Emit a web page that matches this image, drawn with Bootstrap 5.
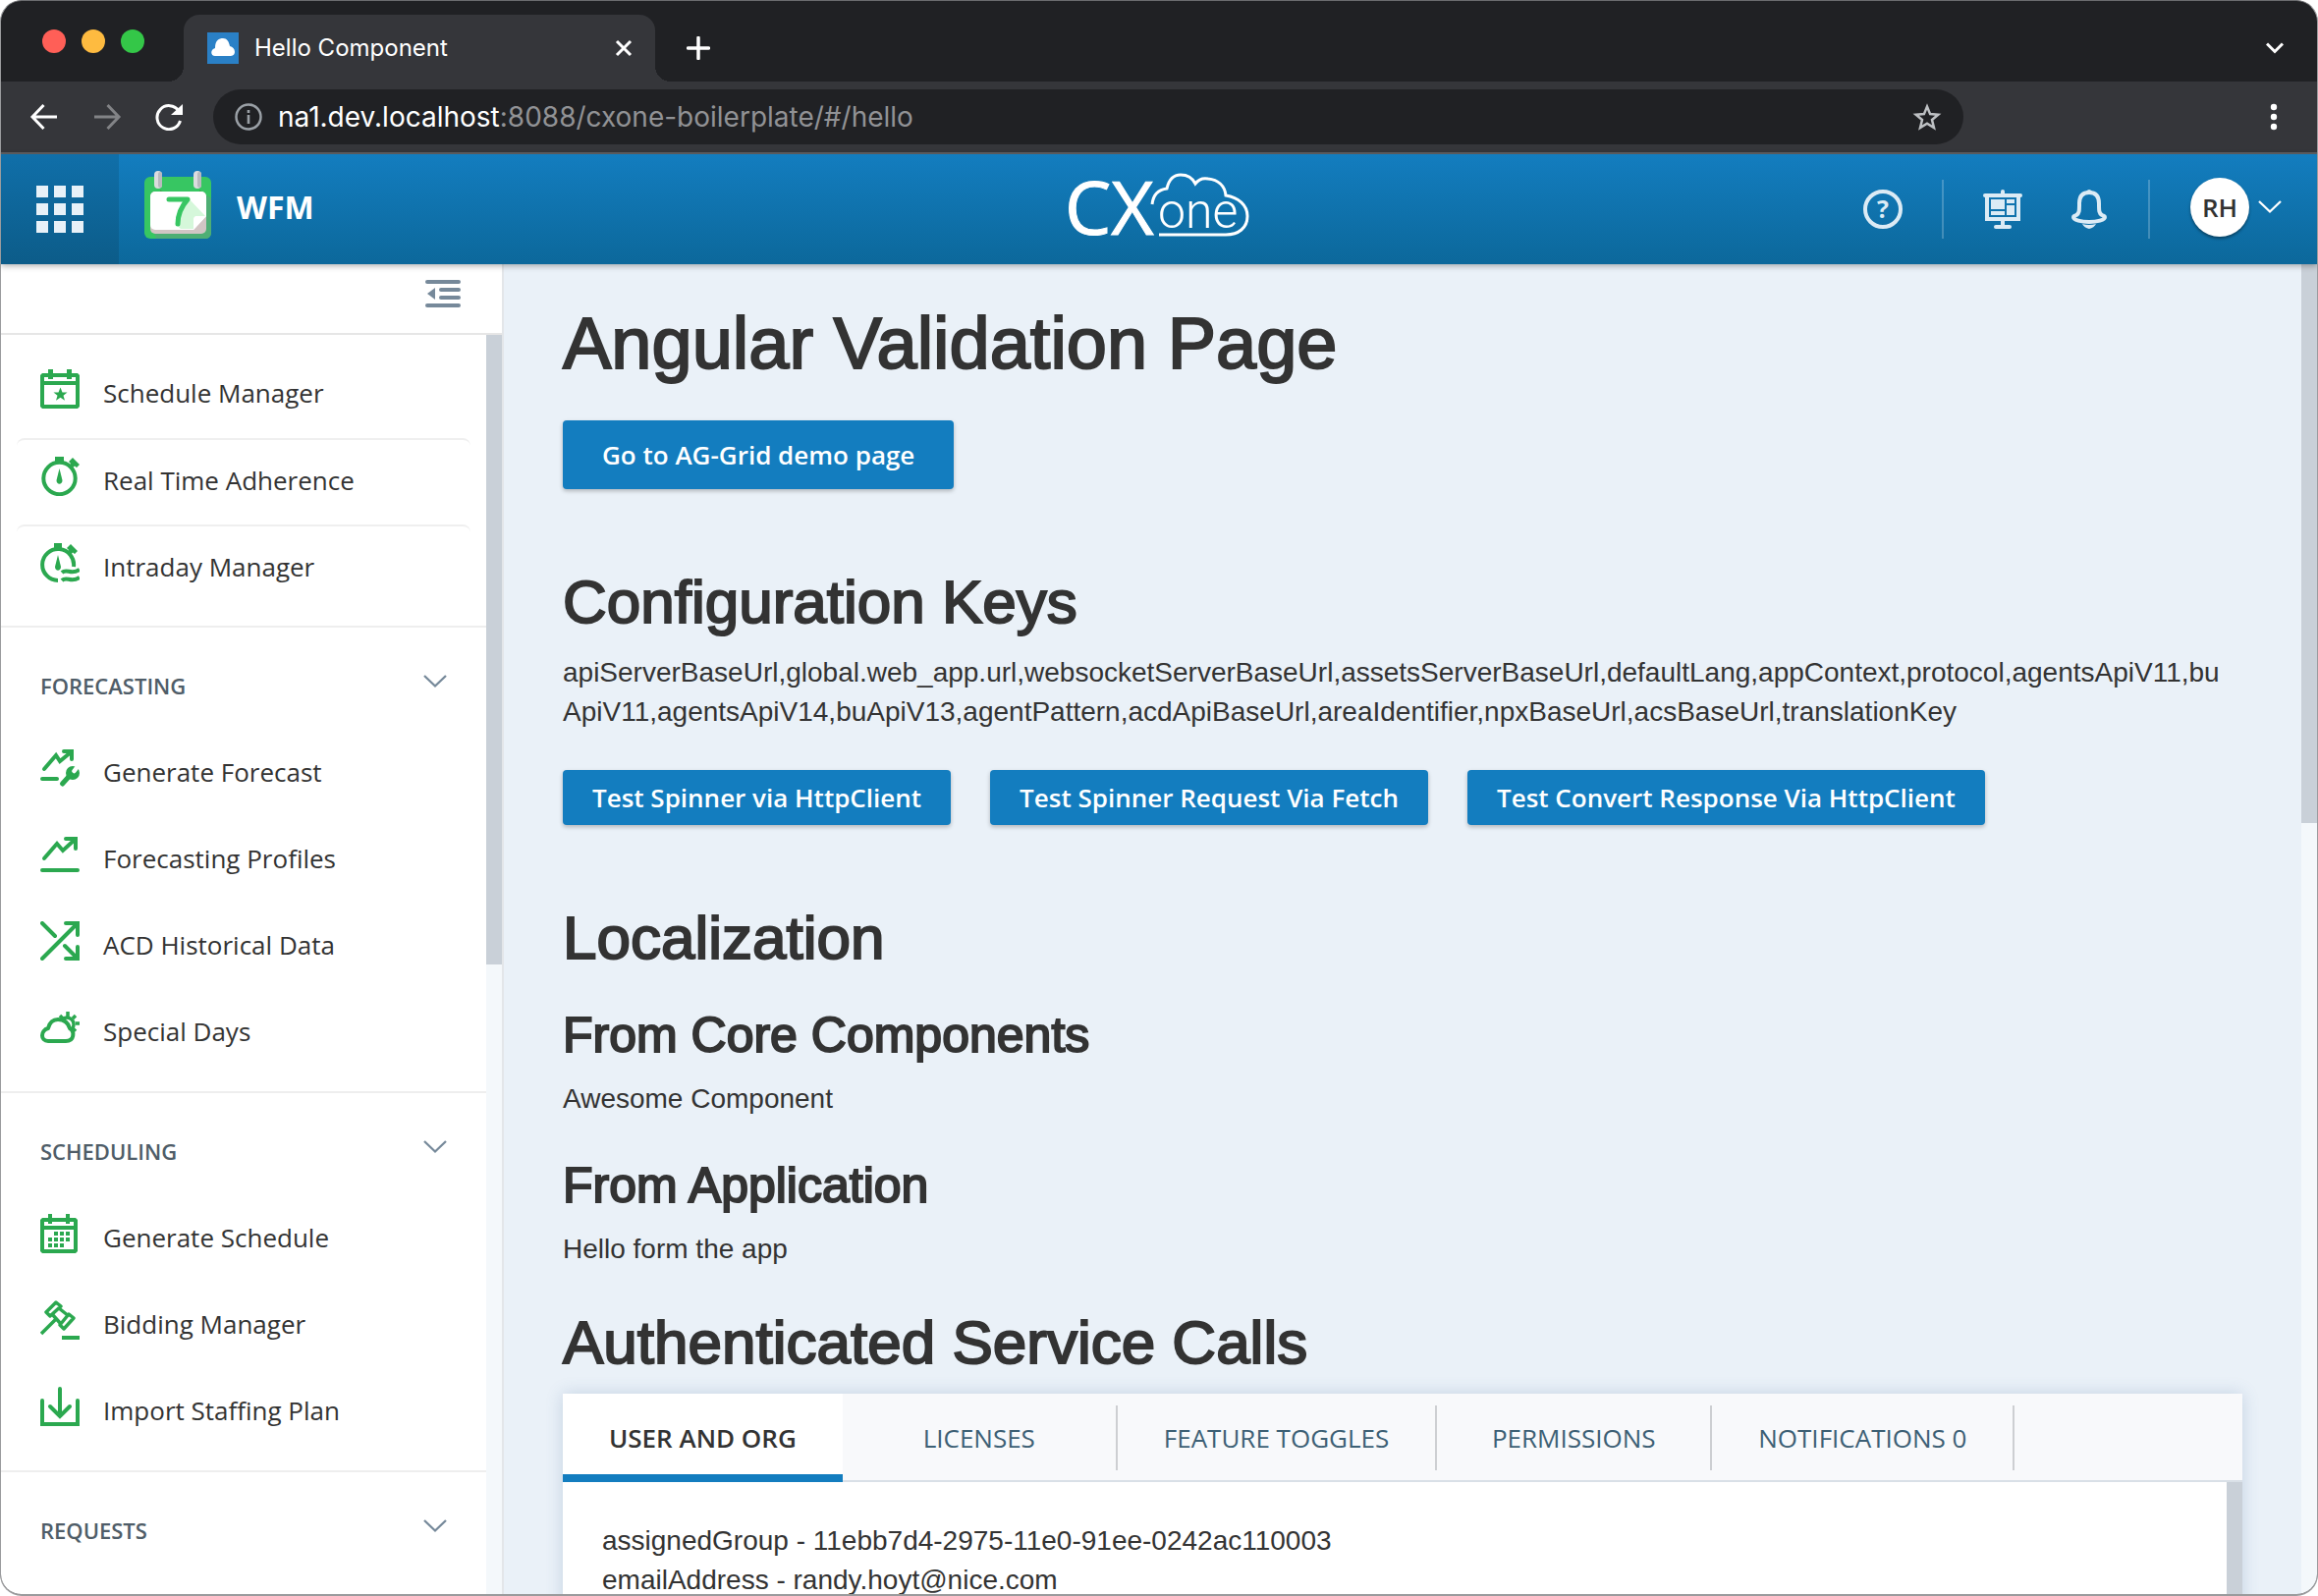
<!DOCTYPE html>
<html lang="en">
<head>
<meta charset="utf-8">
<meta name="viewport" content="width=device-width, initial-scale=1">
<title>Hello Component</title>
<link href="https://cdn.jsdelivr.net/npm/bootstrap@5.3.0/dist/css/bootstrap.min.css" rel="stylesheet">
<style>
  :root { --ink:#333; --blue:#137dbf; --green:#2ba84f; --slate:#76899a; --page:#eaf1f8; --thumb:#c9d0d8; --track:#f4f8fb; }
  body { background:#fff; color:var(--ink); font-family:"Liberation Sans", Arial, sans-serif; font-size:28px; line-height:40px; }
  svg { display:block; flex:none; }
  .window { height:100vh; border:1px solid #9a9b9d; border-top-color:#6b6c6f; border-bottom-width:2px; border-radius:22px; background:#202124; }
  .bare { background:none; border:0; padding:0; color:inherit; }

  /* browser chrome */
  .tab-strip { height:82px; padding:14px 34px 0 42px; color:#fff; font-family:Inter, sans-serif; }
  .lights { padding-right:40px; padding-bottom:14px; }
  .light { width:24px; height:24px; border-radius:50%; }
  .light-close { background:#ff5f57; }
  .light-min { background:#febb40; }
  .light-max { background:#34c748; }
  .browser-tab { width:480px; height:68px; padding:0 20px 0 24px; background:#35363a; border-radius:16px 16px 0 0; font-size:24px; position:relative; }
  .browser-tab::before, .browser-tab::after { content:""; position:absolute; bottom:0; width:16px; height:16px; }
  .browser-tab::before { left:-16px; background:radial-gradient(circle at 0 0, transparent 16px, #35363a 16px); }
  .browser-tab::after { right:-16px; background:radial-gradient(circle at 100% 0, transparent 16px, #35363a 16px); }
  .toolbar { height:74px; padding:8px 32px 8px 28px; background:#35363a; border-bottom:2px solid #5f6063; color:#fff; }
  .address { height:56px; margin-left:30px; border-radius:28px; background:#202124; padding:0 22px 0 22px; font:28px/40px Inter, sans-serif; }
  .address-path { color:#919295; }
  .toolbar-end { width:328px; }

  /* application bar */
  .app-bar { height:112px; background:linear-gradient(#137dbf, #0c689b); color:#fff; position:relative; z-index:2; box-shadow:0 2px 6px rgba(0,0,0,.3); font-family:"Open Sans", sans-serif; }
  .app-launcher { width:120px; height:112px; background:linear-gradient(#106fa9, #0c5c89); }
  .app-title { font-size:32px; font-weight:700; }
  .bar-side { flex:1 1 0; }
  .bar-rule { width:2px; height:60px; background:rgba(255,255,255,.22); }
  .bell { margin:0 42px 0 50px; }
  .account { margin:0 35px 0 17px; }
  .avatar { width:60px; height:60px; border-radius:50%; background:#fff; color:var(--ink); font-size:26px; font-weight:600; box-shadow:0 2px 3px rgba(0,0,0,.4); }

  /* side menu */
  .side { width:512px; background:#fff; border-right:2px solid #e3e6e9; font-family:"Open Sans", sans-serif; }
  .side-top { height:72px; padding:16px 42px 0 0; border-bottom:2px solid #e6e6e6; }
  .side-scroll { width:16px; background:var(--track); }
  .side-thumb { height:50%; background:var(--thumb); }
  .side-group { border-bottom:2px solid #eee; padding-bottom:15px; }
  .side-group:first-child { padding-top:17px; }
  .side-heading { width:100%; height:105px; padding:13px 40px 0; color:#4f5d68; font-size:22px; font-weight:600; text-align:left; }
  .side-heading svg { margin-bottom:8px; color:var(--slate); }
  .side-link { height:88px; margin:0 16px; padding:18px 24px 0; gap:24px; color:var(--ink); font-size:26px; line-height:48px; text-decoration:none; }
  .ruled .side-link + .side-link { border-top:2px solid #efefef; border-radius:8px; padding-top:17px; }

  /* page */
  .page { background:var(--page); padding:38px 60px 0 60px; }
  .page-scroll { width:16px; background:var(--track); }
  .page-thumb { height:42%; background:var(--thumb); }
  .page h1, .page h2, .page h3 { font-weight:400; color:var(--ink); -webkit-text-stroke:2px var(--ink); }
  .page h1 { font-size:74px; line-height:86px; margin:0 0 35px; }
  .page h2 { font-size:62px; line-height:72px; margin:0 0 16px; }
  .page h3 { font-size:50px; line-height:58px; margin:34px 0 16px; }
  .page p { margin:0 0 39px; }
  .page .section-title { margin-top:79px; }
  .key-list { word-break:break-all; padding-right:16px; }
  .action { --bs-btn-bg:var(--blue); --bs-btn-hover-bg:#106fa9; --bs-btn-color:#fff; --bs-btn-hover-color:#fff; height:56px; padding:0 30px; border:0; border-radius:4px; font:600 26px/40px "Open Sans", sans-serif; box-shadow:0 2px 4px rgba(0,0,0,.25); }
  .action-tall { height:70px; padding:0 40px; }
  .action-row { gap:40px; }
  .panel { background:#fff; box-shadow:0 0 16px rgba(60,100,150,.22); }
  .panel .nav-tabs { --bs-nav-tabs-border-width:0; height:90px; background:#f8f9fb; border-bottom:2px solid #d9e0e7; font-family:"Open Sans", sans-serif; }
  .panel .nav-item { display:flex; align-items:center; height:90px; }
  .panel .nav-link { height:66px; min-width:280px; padding:0 47px; margin:0; color:#3d6075; font-size:26px; border:0; border-right:2px solid #cdcfd2; border-radius:0; }
  .panel .nav-link.active { height:90px; padding-top:8px; border-right:0; border-bottom:8px solid var(--blue); color:var(--ink); font-weight:600; }
  .panel-text { padding:40px; }
  .panel-scroll { width:16px; background:var(--thumb); }
</style>
<script src="https://cdn.jsdelivr.net/npm/bootstrap@5.3.0/dist/js/bootstrap.bundle.min.js" defer></script>
</head>
<body>
<svg class="d-none" xmlns="http://www.w3.org/2000/svg">
  <symbol id="chev" viewBox="0 0 24 14"><path d="M1 1l11 10.500L23 1" fill="none" stroke="currentColor" stroke-width="2.300"/></symbol>
</svg>
<div class="window d-flex flex-column overflow-hidden">

  <div class="tab-strip d-flex align-items-center">
    <div class="lights d-flex gap-3">
      <span class="light light-close"></span>
      <span class="light light-min"></span>
      <span class="light light-max"></span>
    </div>
    <div class="browser-tab d-flex align-items-center">
      <svg width="32" height="32" viewBox="0 0 32 32"><path fill="#2a80c6" d="M0 0h32v32H0z"/><path fill="#fff" d="M8 24c-5 0-5-7 0-8 0-8 4-10 8-10s6 3 7 8c6 1 7 10 1 10z"/></svg>
      <span class="ms-3 flex-grow-1">Hello Component</span>
      <button class="bare" aria-label="Close tab"><svg width="24" height="24" viewBox="0 0 24 24" fill="none" stroke="#fff" stroke-width="3"><path d="M5 5l14 14M19 5L5 19"/></svg></button>
    </div>
    <button class="bare ms-4 ps-2" aria-label="New tab"><svg width="24" height="24" viewBox="0 0 24 24" fill="none" stroke="#fff" stroke-width="3.500" stroke-linecap="round"><path d="M12 1.500v21M1.500 12h21"/></svg></button>
    <button class="bare ms-auto" aria-label="Search tabs"><svg width="18" height="12" viewBox="0 0 18 12" fill="none" stroke="#fff" stroke-width="3"><path d="M1 1.500l8 8 8-8"/></svg></button>
  </div>

  <div class="toolbar d-flex align-items-center flex-shrink-0">
    <button class="bare" aria-label="Back"><svg width="32" height="28" viewBox="0 0 32 28" fill="none" stroke="#fff" stroke-width="3"><path d="M29 14H4M15.500 2L4 14l11.500 12"/></svg></button>
    <button class="bare ms-4 ps-2" aria-label="Forward"><svg width="32" height="28" viewBox="0 0 32 28" fill="none" stroke="#828386" stroke-width="3"><path d="M3 14h25M16.500 2L28 14 16.500 26"/></svg></button>
    <button class="bare ms-4 ps-2" aria-label="Reload"><svg width="30" height="28" viewBox="0 0 30 28"><path d="M25 8A12 12 0 1 0 26.500 18" fill="none" stroke="#fff" stroke-width="3"/><path d="M29 1v11H17z" fill="#fff"/></svg></button>
    <div class="address d-flex align-items-center flex-grow-1">
      <svg width="28" height="28" viewBox="0 0 28 28"><circle cx="14" cy="14" r="12.500" fill="none" stroke="#9aa0a6" stroke-width="2.500"/><path fill="#9aa0a6" d="M12.700 12h2.600v9h-2.600zM12.700 7h2.600v3h-2.600z"/></svg>
      <div class="flex-grow-1 ms-3" role="textbox" aria-label="Address" tabindex="0">na1.dev.localhost<span class="address-path">:8088/cxone-boilerplate/#/hello</span></div>
      <button class="bare" aria-label="Bookmark"><svg width="30" height="28" viewBox="0 0 30 28"><path d="M15 3.500l3.100 7.600 8.200.6-6.300 5.300 2 8.100-7-4.400-7 4.400 2-8.100-6.300-5.300 8.200-.6z" fill="none" stroke="#bdc0c3" stroke-width="2.500"/></svg></button>
    </div>
    <div class="toolbar-end d-flex justify-content-end pe-2">
      <button class="bare" aria-label="Menu"><svg width="8" height="28" viewBox="0 0 8 28" fill="#fff"><circle cx="4" cy="4" r="3.200"/><circle cx="4" cy="14" r="3.200"/><circle cx="4" cy="24" r="3.200"/></svg></button>
    </div>
  </div>

  <header class="app-bar d-flex align-items-center flex-shrink-0">
    <div class="bar-side d-flex align-items-center">
      <button class="bare app-launcher d-flex align-items-center justify-content-center" aria-label="Applications">
        <svg width="48" height="48" viewBox="0 0 48 48" fill="#e8f1f8"><path d="M0 0h12v12H0zM18 0h12v12H18zM36 0h12v12H36zM0 18h12v12H0zM18 18h12v12H18zM36 18h12v12H36zM0 36h12v12H0zM18 36h12v12H18zM36 36h12v12H36z"/></svg>
      </button>
      <svg class="ms-4 mb-2" width="72" height="70" viewBox="0 0 72 70">
        <rect x="2" y="6" width="68" height="63" rx="6" fill="#37c662"/>
        <path d="M12 63h58v1a6 6 0 0 1-6 5H14zM64 24l6 4v35h-6z" fill="#4eae74"/>
        <path d="M18 19l10 8H18zM58 19l8 8-8 0z" fill="#42a74f"/>
        <rect x="8" y="21" width="57" height="43" rx="5" fill="#d2c5c4"/>
        <path d="M13 21h47a5 5 0 0 1 5 5v20L52 60H13a5 5 0 0 1-5-5V26a5 5 0 0 1 5-5z" fill="#fff"/>
        <path d="M47 28l17 18H56c-3 0-3 2-3 5v8H39l-5-4z" fill="#d5f7da"/>
        <path d="M65 46L52 60V50c0-3 1-4 4-4z" fill="#fff"/>
        <path d="M27 29h19c-7 8-10 15-10 25" fill="none" stroke="#37c662" stroke-width="5" stroke-linecap="round" stroke-linejoin="round"/>
        <rect x="12" y="0" width="8" height="18" rx="4" fill="#dcdcdf"/><rect x="16" y="1" width="4" height="16" rx="2" fill="#b9babf"/>
        <rect x="52" y="0" width="8" height="18" rx="4" fill="#dcdcdf"/><rect x="56" y="1" width="4" height="16" rx="2" fill="#b9babf"/>
      </svg>
      <span class="app-title ms-4 mb-1">WFM</span>
    </div>
    <svg width="202" height="112" viewBox="-8 -20 202 112" role="img" aria-label="CXone">
      <g fill="#fff"><text x="-3" y="62" font-family="Open Sans, sans-serif" font-size="75" font-weight="500" stroke="#fff">CX</text>
      <text x="92" y="55" font-family="Roboto, sans-serif" font-size="50" font-weight="300">one</text></g>
      <path d="M86 31c1-9 6-15 15-16C103 6 108 1 115 1c7 0 12 3 15 9 3-4 8-6 13-5 10 1 17 7 18 17 13 2 22 10 22 21 0 12-9 19-22 19H93" fill="none" stroke="#fff" stroke-width="3"/>
    </svg>
    <div class="bar-side d-flex align-items-center justify-content-end">
      <button class="bare me-4 pe-3" aria-label="Help"><svg width="40" height="40" viewBox="0 0 40 40"><circle cx="20" cy="20" r="18" fill="none" stroke="#dcebf5" stroke-width="4"/><text x="20" y="29" text-anchor="middle" font-family="Open Sans, sans-serif" font-size="25" font-weight="700" fill="#dcebf5">?</text></svg></button>
      <span class="bar-rule"></span>
      <button class="bare ms-4 ps-3" aria-label="Dashboard"><svg width="40" height="40" viewBox="0 0 40 40" fill="#dcebf5"><rect x="18" width="4" height="6" rx="2"/><rect y="4" width="40" height="4" rx="2"/><path d="M2 6h36v26H2zM6 8v20h28V8z" fill-rule="evenodd"/><path d="M8 10h14v10H8zM8 22h14v4H8zM24 10h8v4h-8zM24 16h8v10h-8zM18 31h4v6h-4z"/><rect x="11" y="36" width="18" height="4" rx="2"/></svg></button>
      <button class="bare bell" aria-label="Notifications"><svg width="36" height="40" viewBox="0 0 36 40" fill="none" stroke="#dcebf5" stroke-width="4"><path d="M18 3c-7 0-10 4-10 11 0 8 0 10-3 12-2 1-3 1-3 2 0 3 8 5 16 5s16-2 16-5c0-1-1-1-3-2-3-2-3-4-3-12 0-7-3-11-10-11z" stroke-linejoin="round"/><path d="M11 35q7 2 14 0-2 4-7 5-5-1-7-5zM14 3q4-6 8 0z" fill="#dcebf5" stroke="none"/></svg></button>
      <span class="bar-rule me-4"></span>
      <button class="bare account d-flex align-items-center" aria-label="Account">
        <span class="avatar d-flex align-items-center justify-content-center mb-1">RH</span>
        <svg class="ms-2 mb-1" width="26" height="14"><use href="#chev"/></svg>
      </button>
    </div>
  </header>

  <div class="d-flex flex-grow-1 overflow-hidden">
    <aside class="side d-flex flex-column flex-shrink-0">
      <div class="side-top d-flex justify-content-end flex-shrink-0">
        <button class="bare align-self-start" aria-label="Collapse menu"><svg width="36" height="28" viewBox="0 0 36 28" fill="#76899a"><rect width="36" height="4" rx="2"/><rect x="14" y="8" width="22" height="4" rx="2"/><rect x="14" y="16" width="22" height="4" rx="2"/><rect y="24" width="36" height="4" rx="2"/><path d="M2 14l8-6v12z"/></svg></button>
      </div>
      <div class="d-flex flex-grow-1 overflow-hidden">
        <nav class="flex-grow-1" aria-label="WFM">
          <div class="side-group ruled">
            <a href="#" class="side-link d-flex"><svg width="40" height="40" viewBox="0 0 40 40" fill="#2ba84f"><path fill-rule="evenodd" d="M2 4h36l2 2v32l-2 2H2l-2-2V6zM4 8v4h32V8zM4 16v20h32V16z"/><path d="M8 0h5v10H8zM27 0h5v10h-5zM20.500 18.500l2 5h5l-4 3.200 1.500 5-4.500-3-4.500 3 1.500-5-4-3.200h5z"/></svg>Schedule Manager</a>
            <a href="#" class="side-link d-flex"><svg width="40" height="40" viewBox="0 0 40 40"><circle cx="19.500" cy="22" r="16.200" fill="none" stroke="#2ba84f" stroke-width="4"/><path fill="#2ba84f" d="M15 0h9v6h-9zM29 5l4-4 7 7-3 3-2-1.500L32 12l-3-3 2-2zM19.500 12l3 12c0 5-6 5-6 0z"/></svg>Real Time Adherence</a>
            <a href="#" class="side-link d-flex"><svg width="40" height="40" viewBox="0 0 40 40"><g fill="none" stroke="#2ba84f" stroke-width="4"><path d="M18 38A16 16 0 1 1 34 24M22 30c5-5 9 3 18-3M22 38c5-5 9 3 18-3"/></g><path fill="#2ba84f" d="M14 0h8v6h-8zM27 5l4-4 7 7-3 3-2-1.500L31 12l-3-3 1-2zM18 12l3 12c0 5-6 5-6 0z"/></svg>Intraday Manager</a>
          </div>
          <div class="side-group">
            <button class="bare side-heading d-flex align-items-center justify-content-between" aria-expanded="true">FORECASTING<svg width="24" height="14"><use href="#chev"/></svg></button>
            <a href="#" class="side-link d-flex"><svg width="40" height="40" viewBox="0 0 40 40" fill="none" stroke="#2ba84f" stroke-width="4" stroke-linecap="round"><path d="M4 21L16 7l4 6L31 4M24 3h8v8M2 31h15"/><path d="M22.500 36l9-10" stroke-width="5"/><circle cx="33" cy="25" r="7" fill="#2ba84f" stroke="none"/><path d="M34.500 23l4.500-6" stroke="#fff" stroke-width="4.500"/></svg>Generate Forecast</a>
            <a href="#" class="side-link d-flex"><svg width="40" height="40" viewBox="0 0 40 40" fill="none" stroke="#2ba84f" stroke-width="4" stroke-linecap="round"><path d="M4 24L17 9l6 7L35 5M26 4h10v10M2 36h36"/></svg>Forecasting Profiles</a>
            <a href="#" class="side-link d-flex"><svg width="40" height="40" viewBox="0 0 40 40" fill="none" stroke="#2ba84f" stroke-width="4" stroke-linecap="round"><path d="M2 38L37 3M26 2h12v12M2 2l13 13M25 25l12 12M26 38h12V26"/></svg>ACD Historical Data</a>
            <a href="#" class="side-link d-flex"><svg width="40" height="40" viewBox="0 0 40 40" fill="none" stroke="#2ba84f" stroke-width="4" stroke-linejoin="round"><path d="M8 34h18c9 0 9-10 4-13-2-7-6-9-12-9-7 0-9 5-10 9-8 2-8 13 0 13z"/><path d="M22 12a7 7 0 1 1 10 10" stroke-width="3.500"/><path d="M28 4v5M20 8l3 3M36 8l-3 3M40 16h-4M36 24l-3-3" stroke-width="3.500"/></svg>Special Days</a>
          </div>
          <div class="side-group">
            <button class="bare side-heading d-flex align-items-center justify-content-between" aria-expanded="true">SCHEDULING<svg width="24" height="14"><use href="#chev"/></svg></button>
            <a href="#" class="side-link d-flex"><svg width="40" height="40" viewBox="0 0 40 40" fill="#2ba84f"><path fill-rule="evenodd" d="M2 4h34l2 2v32l-2 2H2l-2-2V6zM4 8v4h30V8zM4 16v20h30V16z"/><path d="M8 0h4v10H8zM26 0h4v10h-4zM14 18h4v4h-4zM20 18h4v4h-4zM26 18h4v4h-4zM8 24h4v4H8zM14 24h4v4h-4zM20 24h4v4h-4zM26 24h4v4h-4zM8 30h4v4H8zM14 30h4v4h-4zM20 30h4v4h-4z"/></svg>Generate Schedule</a>
            <a href="#" class="side-link d-flex"><svg width="40" height="40" viewBox="0 0 40 40" fill="none" stroke="#2ba84f" stroke-width="3.500" stroke-linejoin="round"><path d="M16 2l5 4-11 10-4-4zM29 14l5 4-10 11-4-4zM19 8l10 8M12 14l9 10M1 34l14-14"/><path d="M22 38h18" stroke-width="4"/></svg>Bidding Manager</a>
            <a href="#" class="side-link d-flex"><svg width="40" height="40" viewBox="0 0 40 40" fill="none" stroke="#2ba84f" stroke-width="4" stroke-linecap="round"><path d="M2 14v24h36V14M20 2v27M10 20l10 10 10-10"/></svg>Import Staffing Plan</a>
          </div>
          <div class="side-group border-0">
            <button class="bare side-heading d-flex align-items-center justify-content-between" aria-expanded="true">REQUESTS<svg width="24" height="14"><use href="#chev"/></svg></button>
          </div>
        </nav>
        <div class="side-scroll"><div class="side-thumb"></div></div>
      </div>
    </aside>

    <main class="page flex-grow-1 overflow-hidden">
      <h1>Angular Validation Page</h1>
      <button class="btn action action-tall d-block">Go to AG-Grid demo page</button>

      <h2 class="section-title">Configuration Keys</h2>
      <p class="key-list">apiServerBaseUrl,global.web_app.url,websocketServerBaseUrl,assetsServerBaseUrl,defaultLang,appContext,protocol,agentsApiV11,buApiV11,agentsApiV14,buApiV13,agentPattern,acdApiBaseUrl,areaIdentifier,npxBaseUrl,acsBaseUrl,translationKey</p>
      <div class="action-row d-flex">
        <button class="btn action">Test Spinner via HttpClient</button>
        <button class="btn action">Test Spinner Request Via Fetch</button>
        <button class="btn action">Test Convert Response Via HttpClient</button>
      </div>

      <h2 class="section-title">Localization</h2>
      <h3>From Core Components</h3>
      <p>Awesome Component</p>
      <h3>From Application</h3>
      <p>Hello form the app</p>

      <h2>Authenticated Service Calls</h2>
      <section class="panel">
        <ul class="nav nav-tabs" role="tablist">
          <li class="nav-item"><button class="nav-link active" role="tab" aria-selected="true">USER AND ORG</button></li>
          <li class="nav-item"><button class="nav-link" role="tab">LICENSES</button></li>
          <li class="nav-item"><button class="nav-link" role="tab">FEATURE TOGGLES</button></li>
          <li class="nav-item"><button class="nav-link" role="tab">PERMISSIONS</button></li>
          <li class="nav-item"><button class="nav-link" role="tab">NOTIFICATIONS 0</button></li>
        </ul>
        <div class="d-flex">
          <div class="panel-text flex-grow-1">
            <div>assignedGroup - 11ebb7d4-2975-11e0-91ee-0242ac110003</div>
            <div>emailAddress - randy.hoyt@nice.com</div>
          </div>
          <div class="panel-scroll"></div>
        </div>
      </section>
    </main>
    <div class="page-scroll flex-shrink-0"><div class="page-thumb"></div></div>
  </div>
</div>
</body>
</html>
